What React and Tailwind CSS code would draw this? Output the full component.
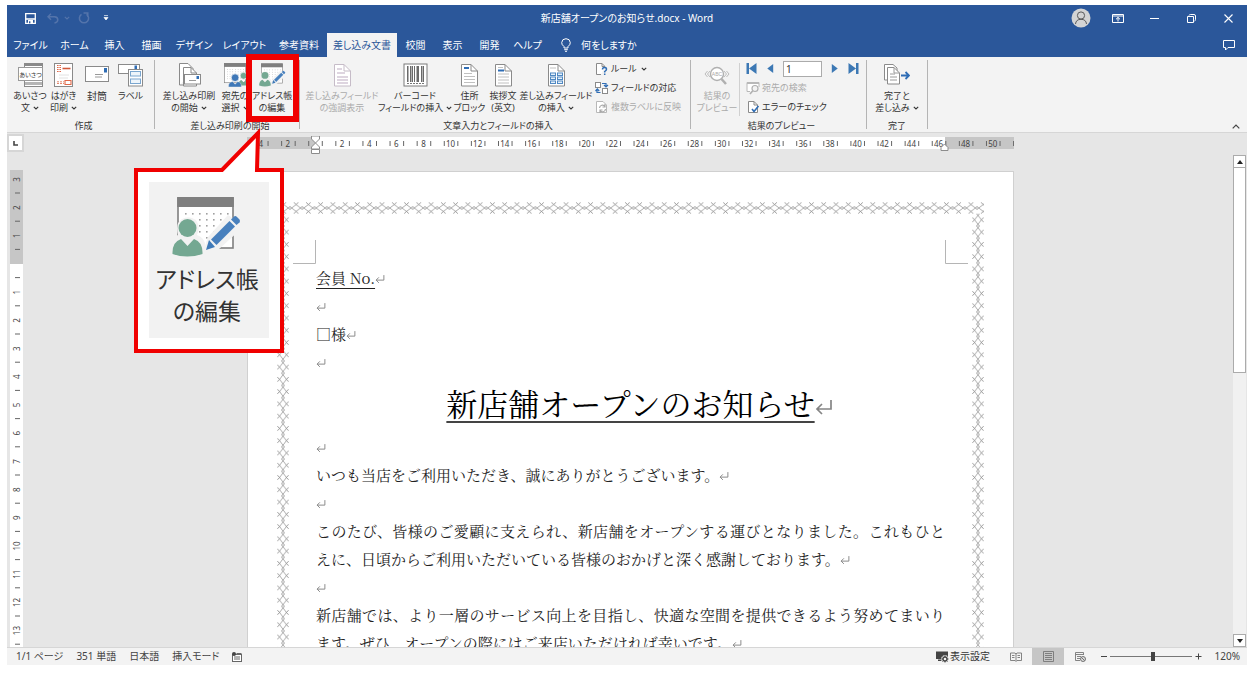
import React from "react";

const range = (n) => Array.from({ length: n }, (_, i) => i);

/* ---------- small shared drawings ---------- */

function Caret({ className = "" }) {
  return (
    <svg className={"inline-block h-[4px] w-[6px] " + className} viewBox="0 0 6 4" aria-hidden="true">
      <path d="M0.8 0.8 L3 3 L5.2 0.8" fill="none" stroke="currentColor" strokeWidth="1.1" />
    </svg>
  );
}

function Mark({ big = false }) {
  return (
    <svg
      className={big ? "-mr-[18px] inline-block h-[18px] w-[18px] align-baseline" : "inline-block h-[10px] w-[10px] align-baseline"}
      viewBox="0 0 18 18"
      aria-hidden="true"
    >
      <path d="M16 2 V11 H2 M7 6 L2 11 L7 16" fill="none" stroke="#858585" strokeWidth="1.7" />
    </svg>
  );
}

function Sheet({ children, color = "#8a8a8a" }) {
  return (
    <>
      <path d="M4.5 1.5 H14 L20.5 8 V23 H4.5 Z" fill="#fff" stroke={color} />
      <path d="M14 1.5 V8 H20.5" fill="none" stroke={color} />
      {children}
    </>
  );
}

function Svg24({ children }) {
  return (
    <svg className="h-[24px] w-[25px] shrink-0" viewBox="0 0 25 24" aria-hidden="true">
      {children}
    </svg>
  );
}

function GreetingIcon() {
  return (
    <Svg24>
      <rect x="6.5" y="0.5" width="18" height="23" fill="#fff" stroke="#8a8a8a" />
      <rect x="7" y="1" width="17" height="2" fill="#8a8a8a" />
      <rect x="7" y="19" width="17" height="3" fill="#b5b5b5" />
      <rect x="0.5" y="4.5" width="24" height="13" fill="#fff" stroke="#9a9a9a" />
      <text x="12.5" y="13.5" fontSize="6" textAnchor="middle" fill="#333" fontFamily="'Noto Sans CJK JP', sans-serif">
        あいさつ
      </text>
    </Svg24>
  );
}

function PostcardIcon() {
  return (
    <Svg24>
      <rect x="3.5" y="0.5" width="18" height="23" fill="#fff" stroke="#8a8a8a" />
      <path d="M6 2.5h4M6 4.5h4M6 6.5h4M6 8.5h4" stroke="#e0694a" strokeWidth="1.2" strokeDasharray="1.6 .8" />
      <path d="M11.5 5.5h8" stroke="#d2583a" strokeWidth="1.6" />
      <path d="M6 20.5h7M6 18.8h7" stroke="#e58a70" strokeDasharray="2 1" />
      <path d="M14 17.5h6v4h-6z" fill="none" stroke="#e0694a" strokeWidth="1.1" />
      <path d="M8 12h10M8 15h9" stroke="#e2e2e2" />
    </Svg24>
  );
}

function EnvelopeIcon() {
  return (
    <Svg24>
      <rect x="0.5" y="3.5" width="23" height="15" fill="#fff" stroke="#8a8a8a" />
      <rect x="19" y="5" width="3" height="4.500" fill="#2f6db5" />
      <path d="M10 11.500h8M10 14h7" stroke="#9a9a9a" />
    </Svg24>
  );
}

function LabelIcon() {
  return (
    <Svg24>
      <rect x="0.5" y="1.5" width="21" height="9" fill="#fff" stroke="#8a8a8a" />
      <rect x="16.500" y="2.500" width="2.500" height="3.500" fill="#2f6db5" />
      <rect x="10.500" y="6.500" width="14" height="16.500" fill="#fff" stroke="#8a8a8a" />
      <rect x="12.500" y="8.500" width="10" height="4.500" fill="#eef5fb" stroke="#7aa6cf" />
      <rect x="12.500" y="16" width="10" height="4.500" fill="#eef5fb" stroke="#7aa6cf" />
    </Svg24>
  );
}

function StartMergeIcon() {
  return (
    <Svg24>
      <path d="M2.500 22V0.500H11L16 5.500V8" fill="#fff" stroke="#8a8a8a" />
      <path d="M2.500 22H6" stroke="#8a8a8a" />
      <path d="M6.500 23V4.500H14L19.500 10V23Z" fill="#fff" stroke="#8a8a8a" />
      <path d="M14 4.500V10H19.500" fill="none" stroke="#8a8a8a" />
      <rect x="7.500" y="11.500" width="16" height="9.500" fill="#fff" stroke="#8a8a8a" />
      <rect x="19.500" y="13" width="2.500" height="3" fill="#2f6db5" />
      <path d="M12 17.500h7" stroke="#9a9a9a" />
    </Svg24>
  );
}

const dotRows = [16, 22, 28, 34, 40];
const dotCols = [13, 20, 27, 34, 41, 48, 55];

function CalendarBase() {
  return (
    <>
      <rect x="6" y="1" width="55" height="50" fill="#fff" stroke="#7f7f7f" strokeWidth="1.600" />
      <rect x="5.200" y="0" width="56.600" height="10" fill="#7f7f7f" />
      {dotRows.map((y) => dotCols.map((x) => <rect key={x + "-" + y} x={x} y={y} width="1.600" height="1.600" fill="#a0a0a0" />))}
    </>
  );
}

function AddressIcon({ className }) {
  return (
    <svg className={"shrink-0 " + className} viewBox="0 0 70 60" aria-hidden="true">
      <CalendarBase />
      <path d="M-2 62V44Q1 40 6 38Q3 26 10 22Q17 18 24 23Q29 30 25 38Q31 40 33 46V62Z" fill="#f2f2f2" />
      <circle cx="15.500" cy="31" r="9" fill="#74a892" />
      <path d="M0.500 57Q0 45 9 42L15.500 49L22 42Q31 45 30.500 57Q15 62 0.500 57Z" fill="#74a892" />
      <path d="M31 55L36 40L56 18L70 27L68 33L47 52L41 55Z" fill="#f2f2f2" />
      <path d="M34 53L37 43L43 50Z" fill="#3f7ab8" />
      <path d="M39 42.500L57.500 24L63 29.500L44.500 48Z" fill="#4880bd" />
      <path d="M59 22.500L62 19.500Q63.500 18.500 65 20L67.500 22.500Q68.500 24 67.500 25.500L64.500 28Z" fill="#4880bd" />
    </svg>
  );
}

function RecipientsIcon() {
  return (
    <svg className="h-[24px] w-[27px] shrink-0" viewBox="0 0 70 62" aria-hidden="true">
      <CalendarBase />
      <circle cx="56" cy="33" r="9" fill="#74a892" stroke="#f2f2f2" strokeWidth="2" />
      <path d="M43 58Q42 46 50 44L56 50L62 44Q70 46 69 58Z" fill="#74a892" />
      <circle cx="34" cy="38" r="10" fill="#3f78b8" stroke="#f2f2f2" strokeWidth="2" />
      <path d="M17 62Q16 50 27 48L34 55L41 48Q51 50 50 62Z" fill="#3f78b8" stroke="#f2f2f2" />
    </svg>
  );
}

function HighlightIcon() {
  return (
    <Svg24>
      <Sheet color="#c6bcc8">
        <path d="M7 6h5M7 10h8M7 14h11M7 17h11M7 20h11" stroke="#d3c8d6" strokeWidth="1.300" />
      </Sheet>
    </Svg24>
  );
}

function BarcodeIcon() {
  return (
    <Svg24>
      <rect x="1" y="1" width="23" height="22" fill="#fff" stroke="#7a7a7a" />
      {[4, 7, 8.500, 11, 13.500, 15, 18, 20].map((x, i) => (
        <rect key={x} x={x} y="3" width={i % 2 ? 1 : 1.500} height="16" fill="#6a6a6a" />
      ))}
      <path d="M4 20.500h17" stroke="#777" strokeDasharray="2 1" />
    </Svg24>
  );
}

function AddressBlockIcon() {
  return (
    <Svg24>
      <Sheet>
        <path d="M7 5h5" stroke="#2f6db5" strokeWidth="2" />
        <path d="M7 10.500h8M7 13.500h11M7 16.500h11M7 19.500h11" stroke="#c0c0c0" />
      </Sheet>
    </Svg24>
  );
}

function GreetingLineIcon() {
  return (
    <Svg24>
      <Sheet>
        <path d="M7 7.500h6" stroke="#2f6db5" strokeWidth="2" />
        <path d="M7 4.500h5M7 11h11M7 14h11M7 17h11M7 20h11" stroke="#c0c0c0" />
      </Sheet>
    </Svg24>
  );
}

function MergeFieldIcon() {
  return (
    <Svg24>
      <Sheet>
        {[10, 14, 18].map((y) => (
          <React.Fragment key={y}>
            <rect x="6.500" y={y} width="5" height="2.500" fill="#e6f1fa" stroke="#4f88c2" />
            <rect x="13.500" y={y} width="5" height="2.500" fill="#e6f1fa" stroke="#4f88c2" />
          </React.Fragment>
        ))}
        <path d="M6 5h6" stroke="#c0c0c0" />
      </Sheet>
    </Svg24>
  );
}

function PreviewIcon() {
  return (
    <svg className="h-[24px] w-[26px] shrink-0" viewBox="0 0 26 24" aria-hidden="true">
      <circle cx="13" cy="11" r="6.500" fill="#fff" stroke="#b0b0b0" strokeWidth="1.400" />
      <path d="M17.500 16L22 21" stroke="#b0b0b0" strokeWidth="2.500" />
      <path d="M3.500 8L1 11L3.500 14M6 8L3.500 11L6 14M20 8L22.500 11L20 14M22.500 8L25 11L22.500 14" fill="none" stroke="#bcbcbc" />
      <text x="13" y="13" fontSize="5" textAnchor="middle" fill="#a8a8a8" fontFamily="'Liberation Sans', sans-serif">
        ABC
      </text>
    </svg>
  );
}

function FinishIcon() {
  return (
    <svg className="h-[24px] w-[26px] shrink-0" viewBox="0 0 26 24" aria-hidden="true">
      <path d="M0.500 17V1.500H9L13 5V17Z" fill="#fff" stroke="#8a8a8a" />
      <path d="M3.500 21V4.500H10L15.500 10V21Z" fill="#fff" stroke="#8a8a8a" />
      <path d="M10 4.500V10H15.500M6 11h5M6 14h7M6 17h7" fill="none" stroke="#9a9a9a" />
      <path d="M17 12.500H25M21.500 9L25 12.500L21.500 16" fill="none" stroke="#2f6db5" strokeWidth="1.800" />
    </svg>
  );
}

function Small({ children }) {
  return (
    <svg className="h-[14px] w-[14px] shrink-0" viewBox="0 0 14 14" aria-hidden="true">
      {children}
    </svg>
  );
}

function RulesIcon() {
  return (
    <Small>
      <path d="M6 12.500H1.500V1.500H7L10 4.500" fill="#fff" stroke="#8a8a8a" />
      <path d="M7 1.500V4.500H10" fill="none" stroke="#8a8a8a" />
      <path d="M7.500 7.500Q7.500 5.500 9.500 5.500Q11.500 5.500 11.500 7.200Q11.500 8.300 9.700 9.500V10.500M9.700 11.500V13" fill="none" stroke="#2f6db5" strokeWidth="1.500" />
    </Small>
  );
}

function MatchIcon() {
  return (
    <Small>
      <rect x="0.500" y="1.500" width="5" height="5" fill="#fff" stroke="#8a8a8a" />
      <rect x="7.500" y="7.500" width="5" height="5" fill="#fff" stroke="#8a8a8a" />
      <path d="M7 2.500H11V5.500M9 4L11 6L13 4M5.500 11.500H2V8.500M0.500 10L2.300 8L4.200 10" fill="none" stroke="#2f6db5" strokeWidth="1.200" />
    </Small>
  );
}

function UpdateLabelsIcon() {
  return (
    <Small>
      <path d="M1.500 1.500H8L11.500 5V12.500H1.500Z" fill="#fff" stroke="#b8b8b8" />
      <path d="M4.500 8A3 3 0 0 1 10 6.500M10 4V7H7.500M10.500 9A3 3 0 0 1 5 10.500M5 13V10H7.500" fill="none" stroke="#a8a8a8" strokeWidth="1.200" />
    </Small>
  );
}

function FindIcon() {
  return (
    <Small>
      <path d="M4 10.500H1V1.500H13V6" fill="#fff" stroke="#b8b8b8" />
      <path d="M1 2.500H13" stroke="#b8b8b8" />
      <circle cx="9" cy="7.500" r="3" fill="#f3f3f3" stroke="#b0b0b0" strokeWidth="1.200" />
      <path d="M6.800 9.800L4 13" stroke="#b0b0b0" strokeWidth="1.600" />
    </Small>
  );
}

function CheckIcon() {
  return (
    <Small>
      <path d="M2.500 1.500H8L11.500 5V12.500H2.500Z" fill="#fff" stroke="#8a8a8a" />
      <path d="M8 1.500V5H11.500" fill="none" stroke="#8a8a8a" />
      <path d="M6 9L8 11.500L12.500 6" fill="none" stroke="#2f6db5" strokeWidth="1.600" />
    </Small>
  );
}

/* ---------- title bar and tabs ---------- */

function TitleBar() {
  return (
    <div className="grid h-[26px] grid-cols-[1fr_auto_1fr] items-center">
      <div className="flex items-center pl-[17px]">
        <button aria-label="上書き保存" className="flex w-[12px] justify-center">
          <svg className="h-[11px] w-[11px]" viewBox="0 0 11 11">
            <path d="M0.700 0.700H10.300V10.300H0.700Z M0.700 6H10.300" fill="none" stroke="#fff" strokeWidth="1.300" />
            <rect x="3" y="7" width="5" height="3.500" fill="#fff" />
            <rect x="4" y="8.300" width="1.400" height="2" fill="#2b579a" />
          </svg>
        </button>
        <button aria-label="元に戻す" className="ml-[11px] flex items-center gap-[5px] text-[#5474ab]">
          <svg className="h-[11px] w-[12px]" viewBox="0 0 12 11">
            <path d="M4 0.800L1 3.800L4 6.800M1 3.800H7.500Q10.800 4 10.800 7Q10.500 9.500 7.500 10" fill="none" stroke="currentColor" strokeWidth="1.500" />
          </svg>
          <Caret />
        </button>
        <button aria-label="やり直し" className="ml-[8px] flex">
          <svg className="h-[12px] w-[12px]" viewBox="0 0 12 12">
            <path d="M3.500 2.300A4.600 4.600 0 1 0 8.500 2.300M5.500 1H9.800V5" fill="none" stroke="#5474ab" strokeWidth="1.500" />
          </svg>
        </button>
        <button aria-label="カスタマイズ" className="ml-[13px] flex">
          <svg className="h-[6px] w-[6px]" viewBox="0 0 6 6">
            <path d="M1 0.600H5M1 2.500H5L3 5Z" fill="#fff" stroke="#fff" strokeWidth=".7" />
          </svg>
        </button>
      </div>
      <h1 className="whitespace-pre text-[10px] text-white">新店舗オープンのお知らせ.docx - Word</h1>
      <div className="flex items-center justify-end">
        <button aria-label="アカウント" className="flex w-[37px] justify-center">
          <svg className="h-[20px] w-[20px]" viewBox="0 0 20 20">
            <circle cx="10" cy="10" r="9.500" fill="#d4d4d4" />
            <circle cx="10" cy="7.500" r="3.600" fill="none" stroke="#5a5a5a" />
            <path d="M4.500 16Q5 11.300 10 11.300Q15 11.300 15.500 16" fill="none" stroke="#5a5a5a" />
          </svg>
        </button>
        <button aria-label="リボンの表示オプション" className="flex w-[37px] justify-center">
          <svg className="h-[9px] w-[12px]" viewBox="0 0 12 9">
            <path d="M0.500 0.500H11.500V8.500H0.500ZM0.500 2H11.500M6 7.500V3.500M4 5.300L6 3.400L8 5.300" fill="none" stroke="#fff" />
          </svg>
        </button>
        <button aria-label="最小化" className="flex w-[37px] justify-center">
          <span className="h-px w-[9px] bg-white" />
        </button>
        <button aria-label="元に戻す (縮小)" className="flex w-[37px] justify-center">
          <svg className="h-[9px] w-[9px]" viewBox="0 0 9 9">
            <path d="M0.500 2.500H6.500V8.500H0.500ZM2 1.500Q2.300 0.500 3.300 0.500H7Q8.500 0.500 8.500 2V5.700Q8.500 6.700 7.500 7" fill="none" stroke="#fff" />
          </svg>
        </button>
        <button aria-label="閉じる" className="flex w-[37px] justify-center">
          <svg className="h-[9px] w-[9px]" viewBox="0 0 9 9">
            <path d="M0.500 0.500L8.500 8.500M8.500 0.500L0.500 8.500" stroke="#fff" strokeWidth="1.100" />
          </svg>
        </button>
      </div>
    </div>
  );
}

const tabs = [
  ["ファイル", "w-[45px]"],
  ["ホーム", "w-[43px]"],
  ["挿入", "w-[37px]"],
  ["描画", "w-[37px]"],
  ["デザイン", "w-[48px]"],
  ["レイアウト", "w-[53px]"],
  ["参考資料", "w-[56px]"],
  ["差し込み文書", "w-[70px]"],
  ["校閲", "w-[37px]"],
  ["表示", "w-[37px]"],
  ["開発", "w-[37px]"],
  ["ヘルプ", "w-[39px]"],
];

function Tabs() {
  return (
    <nav className="flex h-[26px] items-end pl-[1px] text-[10px] text-white">
      {tabs.map(([name, width]) => (
        <button
          key={name}
          className={
            "h-[24px] shrink-0 whitespace-nowrap text-center " +
            width +
            (name === "差し込み文書" ? " bg-[#f3f3f3] text-[#2b579a]" : "")
          }
        >
          {name}
        </button>
      ))}
      <button className="ml-[14px] flex h-[24px] items-center gap-[10px] whitespace-nowrap">
        <svg className="h-[14px] w-[10px]" viewBox="0 0 10 14" aria-hidden="true">
          <path d="M3 10V8.500Q0.700 7 0.700 4.600Q1 0.700 5 0.700Q9 0.700 9.300 4.600Q9.300 7 7 8.500V10ZM3.200 11.700H6.800M4 13.300H6" fill="none" stroke="#fff" />
        </svg>
        何をしますか
      </button>
      <button aria-label="コメント" className="ml-auto flex h-[24px] w-[37px] items-center justify-center">
        <svg className="h-[11px] w-[12px]" viewBox="0 0 12 11">
          <path d="M0.500 0.500H11.500V7.500H5L2.500 10V7.500H0.500Z" fill="none" stroke="#fff" />
        </svg>
      </button>
    </nav>
  );
}

/* ---------- ribbon ---------- */

function Big({ icon, lines, caret, width, muted, small }) {
  return (
    <button
      className={
        "flex shrink-0 flex-col items-center gap-[3px] whitespace-nowrap leading-[12px] " +
        width +
        (muted ? " text-[#ababab]" : " text-[#333333]") +
        (small ? " text-[9px]" : " text-[10px]")
      }
    >
      {icon}
      <span className="flex flex-col items-center">
        {lines.map((line, i) => (
          <span key={line} className="flex items-center gap-[3px]">
            {line}
            {caret && i === lines.length - 1 ? <Caret /> : null}
          </span>
        ))}
      </span>
    </button>
  );
}

function Row({ icon, children, muted }) {
  return (
    <button className={"flex h-[19px] items-center gap-[2px] whitespace-nowrap text-[9px] " + (muted ? "text-[#ababab]" : "text-[#333333]")}>
      {icon}
      {children}
    </button>
  );
}

function Group({ label, children, className = "" }) {
  return (
    <section className={"flex shrink-0 flex-col " + className}>
      <div className="flex flex-1">{children}</div>
      <h2 className="text-center text-[9px] leading-[12px] text-[#333333]">{label}</h2>
    </section>
  );
}

function Divider() {
  return <span className="my-[3px] w-px shrink-0 bg-[#b4b4b4]" />;
}

function Nav({ label, d, width = "w-[10px]" }) {
  return (
    <button aria-label={label} className={"flex justify-center " + width}>
      <svg className="h-[11px] w-[11px]" viewBox="0 0 11 11">
        <path d={d} fill="#3c78b4" />
      </svg>
    </button>
  );
}

function Ribbon() {
  return (
    <div className="flex h-[75px] shrink-0 bg-[#f3f3f3] text-[10px]">
      <Group label="作成" className="w-[147px] pl-[6px] pt-[6px]">
        <Big icon={<GreetingIcon />} lines={["あいさつ", "文"]} caret width="w-[34px]" small />
        <Big icon={<PostcardIcon />} lines={["はがき", "印刷"]} caret width="w-[33px]" small />
        <Big icon={<EnvelopeIcon />} lines={["封筒"]} width="w-[34px]" />
        <Big icon={<LabelIcon />} lines={["ラベル"]} width="w-[33px]" small />
      </Group>
      <Divider />
      <Group label="差し込み印刷の開始" className="w-[144px] pl-[6px] pt-[6px]">
        <Big icon={<StartMergeIcon />} lines={["差し込み印刷", "の開始"]} caret width="w-[56px]" small />
        <Big icon={<RecipientsIcon />} lines={["宛先の", "選択"]} caret width="w-[36px]" small />
        <Big icon={<AddressIcon className="h-[24px] w-[27px]" />} lines={["アドレス帳", "の編集"]} width="w-[38px]" small />
      </Group>
      <Divider />
      <Group label="文章入力とフィールドの挿入" className="w-[390px] pl-[6px] pt-[6px]">
        <Big icon={<HighlightIcon />} lines={["差し込みフィールド", "の強調表示"]} width="w-[72px]" muted small />
        <Big icon={<BarcodeIcon />} lines={["バーコード", "フィールドの挿入"]} caret width="w-[74px]" small />
        <Big icon={<AddressBlockIcon />} lines={["住所", "ブロック"]} width="w-[35px]" small />
        <Big icon={<GreetingLineIcon />} lines={["挨拶文", "(英文)"]} width="w-[32px]" small />
        <Big icon={<MergeFieldIcon />} lines={["差し込みフィールド", "の挿入"]} caret width="w-[74px]" small />
        <div className="-mt-[4px] flex flex-col items-start pl-[2px]">
          <Row icon={<RulesIcon />}>
            ルール <Caret className="ml-[2px]" />
          </Row>
          <Row icon={<MatchIcon />}>フィールドの対応</Row>
          <Row icon={<UpdateLabelsIcon />} muted>
            複数ラベルに反映
          </Row>
        </div>
      </Group>
      <Divider />
      <Group label="結果のプレビュー" className="w-[175px] pl-[6px] pt-[6px]">
        <Big icon={<PreviewIcon />} lines={["結果の", "プレビュー"]} width="w-[40px]" muted small />
        <span className="mx-[2px] mb-[4px] w-px shrink-0 bg-[#d0d0d0]" />
        <div className="-mt-[4px] flex flex-col items-start pl-[4px]">
          <div className="flex h-[19px] items-center gap-[8px]">
            <Nav label="最初のレコード" d="M0.500 0H3V11H0.500ZM10.500 0V11L3 5.500Z" width="w-[11px]" />
            <Nav label="前のレコード" d="M9 0.500V10.500L2.500 5.500Z" />
            <input
              aria-label="レコード"
              defaultValue="1"
              className="h-[16px] w-[39px] border border-[#ababab] bg-white px-[2px] text-[10px] text-[#333333]"
            />
            <Nav label="次のレコード" d="M2 0.500V10.500L8.500 5.500Z" />
            <Nav label="最後のレコード" d="M8 0H10.500V11H8ZM0.500 0V11L8 5.500Z" width="w-[11px]" />
          </div>
          <Row icon={<FindIcon />} muted>
            宛先の検索
          </Row>
          <Row icon={<CheckIcon />}>エラーのチェック</Row>
        </div>
      </Group>
      <Divider />
      <Group label="完了" className="w-[60px] pt-[6px]">
        <Big icon={<FinishIcon />} lines={["完了と", "差し込み"]} caret width="w-[60px]" small />
      </Group>
      <Divider />
      <button aria-label="リボンを折りたたむ" className="ml-auto self-end p-[7px] pb-[3px]">
        <svg className="h-[5px] w-[8px]" viewBox="0 0 8 5">
          <path d="M0.700 4.300L4 1L7.300 4.300" fill="none" stroke="#444" strokeWidth="1.200" />
        </svg>
      </button>
    </div>
  );
}

/* ---------- rulers ---------- */

const unit = 13.555;

function HorizontalRuler() {
  const zero = 68;
  return (
    <svg className="mt-[3px] block h-[18px] w-[767px] shrink-0" viewBox="0 -1 767 18" aria-hidden="true">
      <rect width="767" height="12" fill="#c6c6c6" />
      <rect x={zero} width="630" height="12" fill="#fff" />
      {range(57).map((i) => {
        const x = zero + (i - 4.5) * unit;
        return x < 767 ? <rect key={i} x={x} y="4" width="1" height="5" fill="#666" /> : null;
      })}
      {range(28).map((i) => {
        const n = (i - 2) * 2;
        return n === 0 || n > 50 ? null : (
          <text key={n} x={zero + n * unit} y="10" fontSize="8" textAnchor="middle" fill="#444" fontFamily="'Noto Sans', sans-serif">
            {Math.abs(n)}
          </text>
        );
      })}
      <path d="M64.500 -1H72.500V2L68.500 6L64.500 2ZM68.500 6L72.500 10V12H64.500V10ZM64.500 12.500H72.500V16.500H64.500Z" fill="#fff" stroke="#8c8c8c" />
      <path d="M697.500 7L701 10.500V13.500H694V10.500Z" fill="#fff" stroke="#8c8c8c" />
    </svg>
  );
}

function VerticalRuler() {
  const zero = 94;
  return (
    <svg className="ml-[3px] block h-[477px] w-[13px]" viewBox="0 0 13 477" aria-hidden="true">
      <rect width="13" height="477" fill="#fff" />
      <rect width="13" height={zero} fill="#c6c6c6" />
      {range(17).map((i) => (
        <rect key={i} x="5" y={zero + (i - 2.500) * 28.200 - 1} width="5" height="1" fill="#666" />
      ))}
      {range(17).map((i) => {
        const n = i - 3;
        const y = zero + n * 28.200;
        return n === 0 ? null : (
          <text key={n} x="0" y="0" transform={`translate(10 ${y}) rotate(-90)`} fontSize="8" textAnchor="middle" fill="#444" fontFamily="'Noto Sans', sans-serif">
            {Math.abs(n)}
          </text>
        );
      })}
    </svg>
  );
}

/* ---------- document ---------- */

function PageBorder() {
  return (
    <svg className="pointer-events-none absolute left-0 top-0 h-[1082px] w-[765px]" viewBox="0 0 765 1082" aria-hidden="true">
      <defs>
        <g id="link" fill="none" stroke="#9a9a9a" strokeWidth=".8">
          <circle cx="0" cy="0" r="1.300" />
          <circle cx="12.270" cy="0" r="1.300" />
          <path d="M1.600 0L6.130 -3.400L10.660 0L6.130 3.400Z" />
          <path d="M3.900 -5.600L6.130 -3.400L8.360 -5.600M3.900 5.600L6.130 3.400L8.360 5.600" stroke="#808080" />
        </g>
        <pattern id="across" x="29.700" y="29" width="12.270" height="14" patternUnits="userSpaceOnUse">
          <use href="#link" x="0" y="7" />
        </pattern>
        <pattern id="down" x="28" y="41.700" width="14" height="12.270" patternUnits="userSpaceOnUse">
          <use href="#link" transform="translate(7 0) rotate(90)" />
        </pattern>
        <pattern id="downRight" x="723" y="41.700" width="14" height="12.270" patternUnits="userSpaceOnUse">
          <use href="#link" transform="translate(7 0) rotate(90)" />
        </pattern>
      </defs>
      <rect x="28" y="29" width="708" height="14" fill="url(#across)" />
      <rect x="28" y="41.700" width="14" height="1000" fill="url(#down)" />
      <rect x="723" y="41.700" width="14" height="1000" fill="url(#downRight)" />
      <path d="M67.500 68V91.500H45M697.500 68V91.500H720" fill="none" stroke="#b5b5b5" />
    </svg>
  );
}

function FullLine({ children }) {
  return <span className="block whitespace-nowrap text-justify [text-align-last:justify]">{children}</span>;
}

function Page() {
  return (
    <article
      lang="ja"
      className="relative mt-[17px] h-[1084px] w-[767px] shrink-0 border border-[#d0d0d0] bg-white px-[68px] pt-[92px] font-['Noto_Serif_CJK_JP','Noto_Serif_JP','Liberation_Serif','Noto_Sans_CJK_JP',serif] text-[15px] font-normal leading-[28px] text-[#222222] [font-feature-settings:normal]"
    >
      <PageBorder />
      <p>
        <span className="underline decoration-1 underline-offset-[4px]">会員 No.</span>
        <Mark />
      </p>
      <p><Mark /></p>
      <p>□様<Mark /></p>
      <p><Mark /></p>
      <h2 className="pb-[4px] text-center text-[31px] leading-[53px] text-black">
        <span className="underline decoration-[#444444] decoration-2 underline-offset-[5px]">新店舗オープンのお知らせ</span>
        <Mark big />
      </h2>
      <p><Mark /></p>
      <p>いつも当店をご利用いただき、誠にありがとうございます。<Mark /></p>
      <p><Mark /></p>
      <p>
        <FullLine>このたび、皆様のご愛顧に支えられ、新店舗をオープンする運びとなりました。これもひと</FullLine>
        えに、日頃からご利用いただいている皆様のおかげと深く感謝しております。
        <Mark />
      </p>
      <p><Mark /></p>
      <p>
        <FullLine>新店舗では、より一層のサービス向上を目指し、快適な空間を提供できるよう努めてまいり</FullLine>
        ます。ぜひ、オープンの際にはご来店いただければ幸いです。
        <Mark />
      </p>
    </article>
  );
}

function ScrollBar() {
  return (
    <div className="flex w-[15px] shrink-0 flex-col items-center pt-[22px]">
      <div className="flex w-[13px] flex-1 flex-col bg-[#f1f1f1]">
        <button aria-label="上へスクロール" className="flex h-[13px] items-center justify-center border border-[#ababab] bg-white">
          <svg className="h-[4px] w-[6px]" viewBox="0 0 6 4"><path d="M0 4L3 0L6 4Z" fill="#222" /></svg>
        </button>
        <div className="-mt-px h-[206px] border border-[#ababab] bg-white" />
        <button aria-label="下へスクロール" className="mt-auto flex h-[13px] items-center justify-center border border-[#ababab] bg-white">
          <svg className="h-[4px] w-[6px]" viewBox="0 0 6 4"><path d="M0 0L3 4L6 0Z" fill="#222" /></svg>
        </button>
      </div>
    </div>
  );
}

function Workspace() {
  return (
    <main className="flex min-h-0 flex-1 overflow-hidden border-t border-[#d6d6d6] bg-[#e6e6e6]">
      <div className="flex w-[17px] shrink-0 flex-col overflow-hidden">
        <button aria-label="タブの種類" className="mb-[18px] mt-px flex h-[18px] shrink-0 items-center justify-center border-2 border-[#d6d6d6] bg-white">
          <svg className="h-[5px] w-[5px]" viewBox="0 0 5 5"><path d="M1 0V4H5" fill="none" stroke="#444" strokeWidth="1.600" /></svg>
        </button>
        <VerticalRuler />
      </div>
      <div className="flex min-w-0 flex-1 flex-col items-center overflow-hidden pl-[5px]">
        <HorizontalRuler />
        <Page />
      </div>
      <ScrollBar />
    </main>
  );
}

/* ---------- status bar ---------- */

function StatusBar() {
  return (
    <footer className="flex h-[18px] shrink-0 items-center border-t border-[#d6d6d6] bg-[#f3f3f3] pl-[9px] pr-[7px] text-[10px] text-[#444444]">
      <div className="flex items-center gap-[13px] whitespace-nowrap">
        <span>1/1 ページ</span>
        <span>351 単語</span>
        <span>日本語</span>
        <span>挿入モード</span>
        <svg className="h-[10px] w-[10px]" viewBox="0 0 10 10" aria-hidden="true">
          <rect x="0.500" y="2.500" width="9" height="7" fill="#fff" stroke="#666" />
          <circle cx="2" cy="2" r="2" fill="#444" />
          <path d="M4.500 1.500H9.500M2 5H8M2 7H8" stroke="#666" />
        </svg>
      </div>
      <div className="ml-auto flex h-full items-center">
        <button className="flex items-center gap-px whitespace-nowrap text-[#333333]">
          <svg className="h-[12px] w-[13px]" viewBox="0 0 13 12" aria-hidden="true">
            <path d="M0 0.500H12V8H0ZM2 10H6V8.500H2Z" fill="#444" />
            <circle cx="9" cy="8" r="3.800" fill="#f3f3f3" />
            <circle cx="9" cy="8" r="2" fill="none" stroke="#444" strokeWidth="1.400" />
            <path d="M9 4.500V6M9 10V11.500M5.500 8H7M11 8H12.500M6.500 5.500L7.500 6.500M10.500 9.500L11.500 10.500M11.500 5.500L10.500 6.500M6.500 10.500L7.500 9.500" stroke="#444" />
          </svg>
          表示設定
        </button>
        <button aria-label="閲覧モード" className="ml-[10px] flex h-full w-[32px] items-center justify-center">
          <svg className="h-[10px] w-[12px]" viewBox="0 0 12 10">
            <path d="M0.500 1H5L6 2L7 1H11.500V8.500H7L6 9.500L5 8.500H0.500ZM6 2V9M2 3.500H4.500M2 5.500H4.500M7.500 3.500H10M7.500 5.500H10" fill="none" stroke="#777" strokeWidth=".9" />
          </svg>
        </button>
        <button aria-label="印刷レイアウト" className="flex h-full w-[32px] items-center justify-center bg-[#c6c6c6]">
          <svg className="h-[11px] w-[11px]" viewBox="0 0 11 11">
            <path d="M0.500 0.500H10.500V10.500H0.500ZM2 2.500H9M2 4.500H9M2 6.500H9M2 8.500H9" fill="none" stroke="#777" strokeWidth=".9" />
          </svg>
        </button>
        <button aria-label="Web レイアウト" className="flex h-full w-[32px] items-center justify-center">
          <svg className="h-[10px] w-[11px]" viewBox="0 0 11 10">
            <path d="M5 8.500H0.500V0.500H8.500V3M0.500 2.500H8.500M2 4.500H6M2 6.500H5" fill="none" stroke="#777" strokeWidth=".9" />
            <circle cx="8" cy="7" r="2.500" fill="#ddd" stroke="#666" strokeWidth=".9" />
            <path d="M6.500 5.500L9.500 8.500" stroke="#666" strokeWidth=".9" />
          </svg>
        </button>
        <button aria-label="縮小" className="ml-[4px] flex w-[7px] justify-center"><span className="h-px w-[6px] bg-[#444]" /></button>
        <input
          type="range"
          aria-label="ズーム"
          min="0"
          max="100"
          defaultValue="53"
          className="ml-[3px] h-[10px] w-[82px] appearance-none bg-[linear-gradient(#777,#777)] bg-[length:100%_1px] bg-center bg-no-repeat [&::-webkit-slider-thumb]:h-[9px] [&::-webkit-slider-thumb]:w-[4px] [&::-webkit-slider-thumb]:appearance-none [&::-webkit-slider-thumb]:bg-[#444444]"
        />
        <button aria-label="拡大" className="ml-[3px] flex w-[7px] justify-center">
          <svg className="h-[7px] w-[7px]" viewBox="0 0 7 7"><path d="M3.500 0.500V6.500M0.500 3.500H6.500" stroke="#444" /></svg>
        </button>
        <span className="ml-[11px] w-[27px] whitespace-nowrap text-right">120%</span>
      </div>
    </footer>
  );
}

/* ---------- annotation over the window ---------- */

function Callout() {
  return (
    <>
      <div className="pointer-events-none absolute left-[246px] top-[54px] h-[68px] w-[53px] border-[6px] border-[#f00000]" />
      <div className="pointer-events-none absolute left-[134px] top-[126px] h-[228px] w-[150px] px-[15px] pt-[56px]">
        <svg className="absolute left-0 top-0 h-[228px] w-[150px]" viewBox="0 0 150 228" aria-hidden="true">
          <path d="M2 44H88L124 7L123 44H148V225H2Z" fill="#fff" stroke="#f00000" strokeWidth="4" strokeLinejoin="miter" />
        </svg>
        <div className="relative flex h-[156px] flex-col items-center bg-[#f2f2f2] pr-[4px] pt-[15px] text-[23px] leading-[32px] text-[#333333]">
          <AddressIcon className="h-[60px] w-[70px]" />
          <span className="mt-[6px] whitespace-nowrap">アドレス帳</span>
          <span className="whitespace-nowrap">の編集</span>
        </div>
      </div>
    </>
  );
}

export default function App() {
  return (
    <div
      lang="ja"
      className="relative flex h-screen flex-col overflow-hidden bg-white pt-[5px] pr-[9px] pb-[9px] pl-[7px] font-['Noto_Sans','Noto_Sans_CJK_JP',sans-serif] [font-feature-settings:'palt']"
    >
      <header className="shrink-0 bg-[#2b579a]">
        <TitleBar />
        <Tabs />
      </header>
      <Ribbon />
      <Workspace />
      <StatusBar />
      <Callout />
    </div>
  );
}
